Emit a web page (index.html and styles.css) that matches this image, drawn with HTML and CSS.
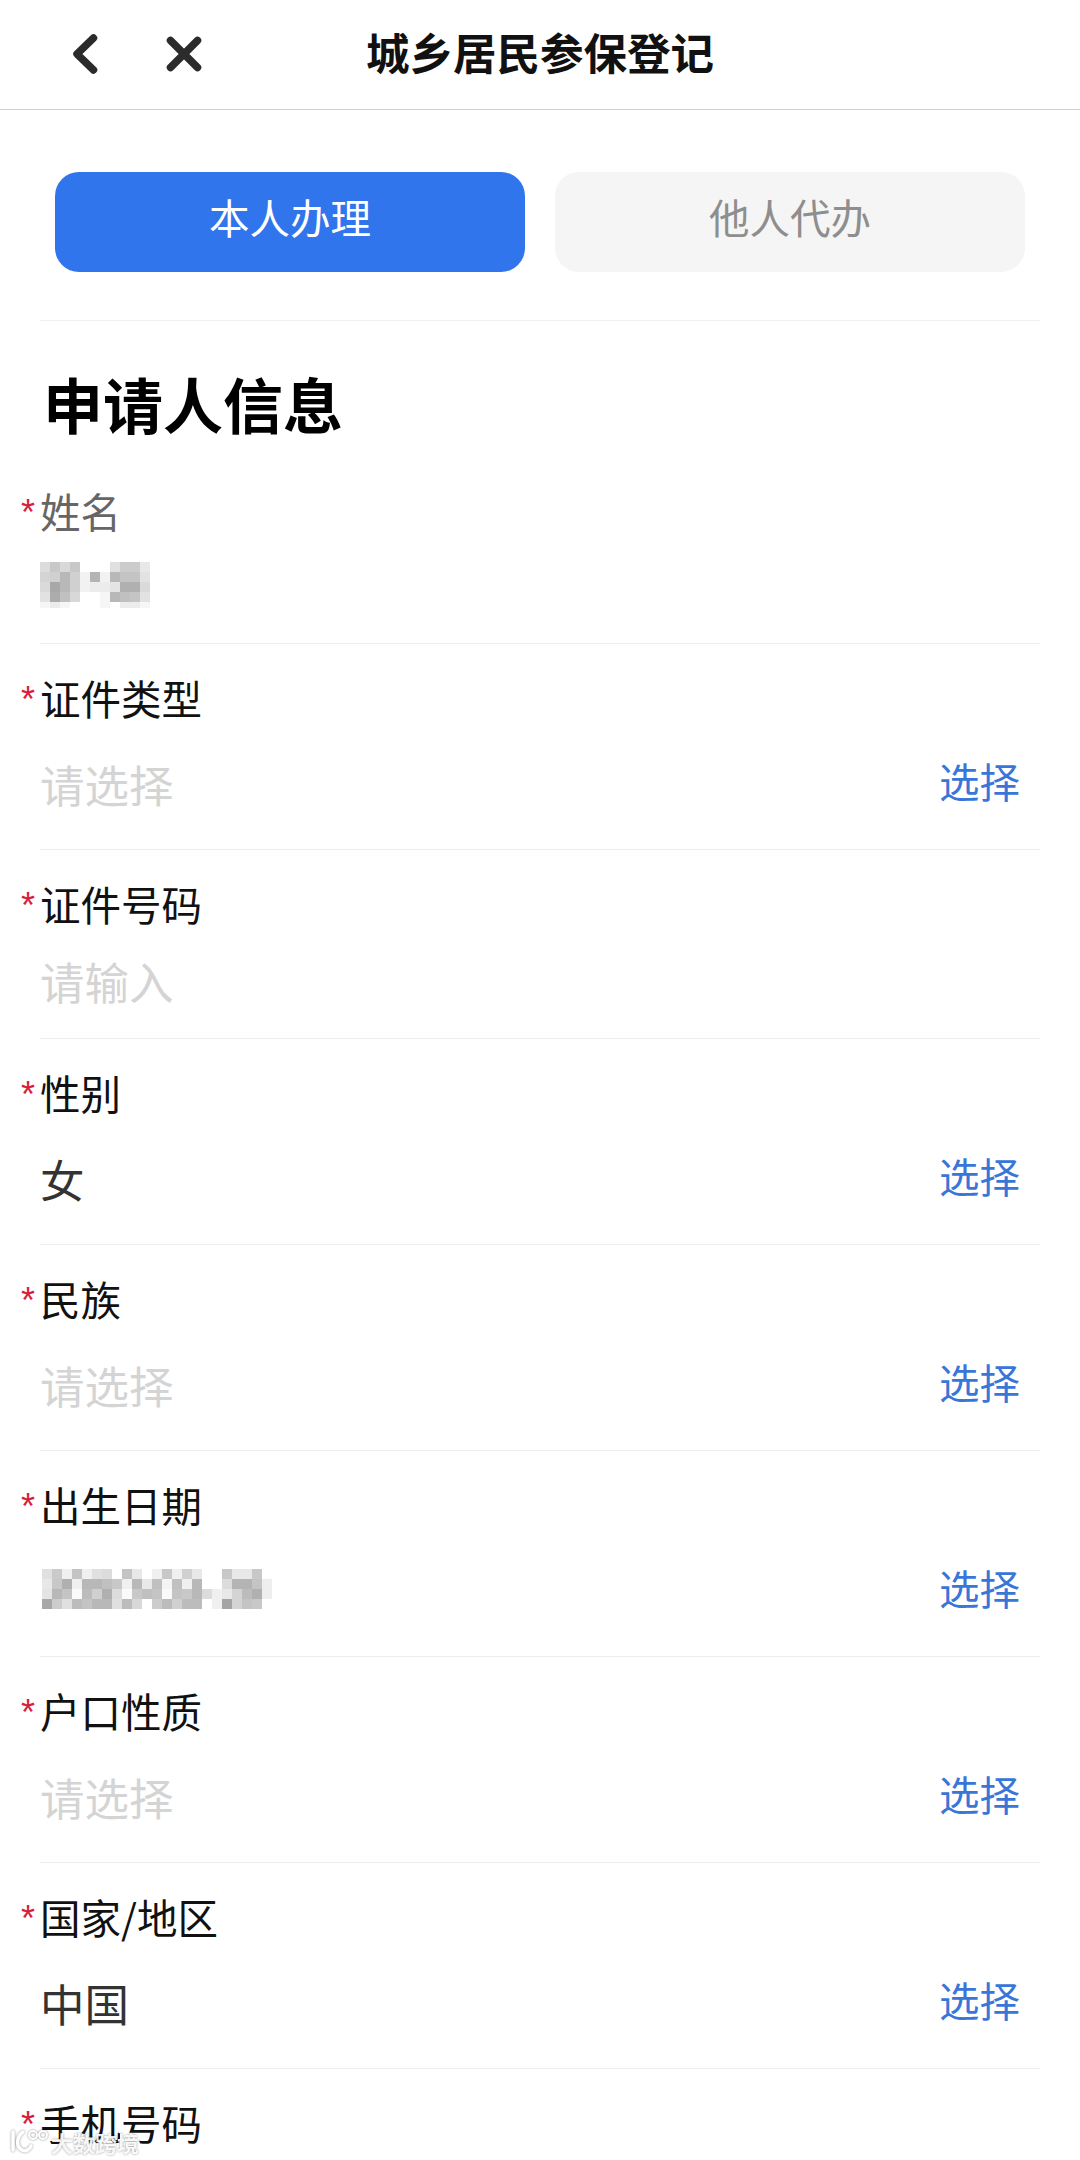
FILE: index.html
```html
<!DOCTYPE html>
<html lang="zh-CN">
<head>
<meta charset="utf-8">
<title>城乡居民参保登记</title>
<link rel="stylesheet" href="styles.css">
</head>
<body>
<div class="page">
  <header class="nav">
    <div class="nav-icons">
      <svg class="icon-back" width="26" height="40" viewBox="0 0 26 40"><path d="M21.5 4 L5 20 L21.5 36" fill="none" stroke="#2b2b2b" stroke-width="7.5" stroke-linecap="round" stroke-linejoin="round"/></svg>
      <svg class="icon-close" width="36" height="36" viewBox="0 0 36 36"><path d="M4.5 4.5 L31.5 31.5 M31.5 4.5 L4.5 31.5" fill="none" stroke="#2b2b2b" stroke-width="7.5" stroke-linecap="round"/></svg>
    </div>
    <h1 class="nav-title">城乡居民参保登记</h1>
  </header>

  <div class="tabs">
    <div class="tab tab-active"><span class="tab-text">本人办理</span></div>
    <div class="tab"><span class="tab-text">他人代办</span></div>
  </div>

  <main class="form">
    <h2 class="section-title">申请人信息</h2>

    <div class="row row-name">
      <div class="label label-muted">姓名</div>
      <div class="value-line">
        <svg class="mosaic" width="110" height="46" viewBox="0 0 11 4.6" shape-rendering="crispEdges">
          <g id="n0">
            <rect x="0" y="0" width="1" height="1" fill="#dcdcdc"/><rect x="1" y="0" width="1" height="1" fill="#c8c8c8"/><rect x="2" y="0" width="1" height="1" fill="#d8d8d8"/><rect x="3" y="0" width="1" height="1" fill="#c8c8c8"/><rect x="7" y="0" width="1" height="1" fill="#e0e0e0"/><rect x="8" y="0" width="1" height="1" fill="#cccccc"/><rect x="9" y="0" width="1" height="1" fill="#cccccc"/><rect x="10" y="0" width="1" height="1" fill="#e8e8e8"/>
            <rect x="0" y="1" width="1" height="1" fill="#d4d4d4"/><rect x="1" y="1" width="1" height="1" fill="#d0d0d0"/><rect x="2" y="1" width="1" height="1" fill="#b8b8b8"/><rect x="3" y="1" width="1" height="1" fill="#d0d0d0"/><rect x="4" y="1" width="1" height="1" fill="#f2f2f2"/><rect x="5" y="1" width="1" height="1" fill="#b4b4b4"/><rect x="6" y="1" width="1" height="1" fill="#f2f2f2"/><rect x="7" y="1" width="1" height="1" fill="#b8b8b8"/><rect x="8" y="1" width="1" height="1" fill="#c4c4c4"/><rect x="9" y="1" width="1" height="1" fill="#c4c4c4"/><rect x="10" y="1" width="1" height="1" fill="#e2e2e2"/>
            <rect x="0" y="2" width="1" height="1" fill="#dadada"/><rect x="1" y="2" width="1" height="1" fill="#a8a8a8"/><rect x="2" y="2" width="1" height="1" fill="#b8b8b8"/><rect x="3" y="2" width="1" height="1" fill="#d0d0d0"/><rect x="4" y="2" width="1" height="1" fill="#f2f2f2"/><rect x="5" y="2" width="1" height="1" fill="#ececec"/><rect x="6" y="2" width="1" height="1" fill="#ececec"/><rect x="7" y="2" width="1" height="1" fill="#e4e4e4"/><rect x="8" y="2" width="1" height="1" fill="#b0b0b0"/><rect x="9" y="2" width="1" height="1" fill="#b0b0b0"/><rect x="10" y="2" width="1" height="1" fill="#dadada"/>
            <rect x="0" y="3" width="1" height="1" fill="#e2e2e2"/><rect x="1" y="3" width="1" height="1" fill="#acacac"/><rect x="2" y="3" width="1" height="1" fill="#c0c0c0"/><rect x="3" y="3" width="1" height="1" fill="#d8d8d8"/><rect x="6" y="3" width="1" height="1" fill="#f6f6f6"/><rect x="7" y="3" width="1" height="1" fill="#b8b8b8"/><rect x="8" y="3" width="1" height="1" fill="#c0c0c0"/><rect x="9" y="3" width="1" height="1" fill="#c4c4c4"/><rect x="10" y="3" width="1" height="1" fill="#e2e2e2"/>
            <rect x="0" y="4" width="1" height="0.6" fill="#f6f6f6"/><rect x="1" y="4" width="1" height="0.6" fill="#ececec"/><rect x="2" y="4" width="1" height="0.6" fill="#f6f6f6"/><rect x="6" y="4" width="1" height="0.6" fill="#f6f6f6"/><rect x="8" y="4" width="1" height="0.6" fill="#ececec"/><rect x="9" y="4" width="1" height="0.6" fill="#ececec"/><rect x="10" y="4" width="1" height="0.6" fill="#f6f6f6"/>
          </g>
        </svg>
      </div>
    </div>

    <div class="row">
      <div class="label">证件类型</div>
      <div class="value-line"><span class="value placeholder">请选择</span><span class="select">选择</span></div>
    </div>

    <div class="row row-input">
      <div class="label">证件号码</div>
      <div class="value-line"><span class="value placeholder">请输入</span></div>
    </div>

    <div class="row">
      <div class="label">性别</div>
      <div class="value-line"><span class="value">女</span><span class="select">选择</span></div>
    </div>

    <div class="row">
      <div class="label">民族</div>
      <div class="value-line"><span class="value placeholder">请选择</span><span class="select">选择</span></div>
    </div>

    <div class="row">
      <div class="label">出生日期</div>
      <div class="value-line">
        <svg class="mosaic mosaic-date" width="232" height="42" viewBox="0 0 23.2 4.2" shape-rendering="crispEdges">
          <rect x="0" y="0" width="1" height="1" fill="#e0e0e0"/><rect x="1" y="0" width="1" height="1" fill="#cacaca"/><rect x="2" y="0" width="1" height="1" fill="#f0f0f0"/><rect x="3" y="0" width="1" height="1" fill="#c4c4c4"/><rect x="4" y="0" width="1" height="1" fill="#f0f0f0"/><rect x="5" y="0" width="1" height="1" fill="#e0e0e0"/><rect x="6" y="0" width="1" height="1" fill="#dcdcdc"/><rect x="8" y="0" width="1" height="1" fill="#c4c4c4"/><rect x="9" y="0" width="1" height="1" fill="#e8e8e8"/><rect x="11" y="0" width="1" height="1" fill="#f0f0f0"/><rect x="12" y="0" width="1" height="1" fill="#c8c8c8"/><rect x="13" y="0" width="1" height="1" fill="#f0f0f0"/><rect x="14" y="0" width="1" height="1" fill="#d0d0d0"/><rect x="15" y="0" width="1" height="1" fill="#e8e8e8"/><rect x="18" y="0" width="1" height="1" fill="#c8c8c8"/><rect x="19" y="0" width="1" height="1" fill="#e8e8e8"/><rect x="20" y="0" width="1" height="1" fill="#e8e8e8"/><rect x="21" y="0" width="1" height="1" fill="#c8c8c8"/>
          <rect x="0" y="1" width="1" height="1" fill="#e8e8e8"/><rect x="1" y="1" width="1" height="1" fill="#c8c8c8"/><rect x="2" y="1" width="1" height="1" fill="#b0b0b0"/><rect x="3" y="1" width="1" height="1" fill="#f0f0f0"/><rect x="4" y="1" width="1" height="1" fill="#b8b8b8"/><rect x="5" y="1" width="1" height="1" fill="#b8b8b8"/><rect x="6" y="1" width="1" height="1" fill="#c0c0c0"/><rect x="7" y="1" width="1" height="1" fill="#c8c8c8"/><rect x="8" y="1" width="1" height="1" fill="#f0f0f0"/><rect x="9" y="1" width="1" height="1" fill="#b8b8b8"/><rect x="10" y="1" width="1" height="1" fill="#e8e8e8"/><rect x="11" y="1" width="1" height="1" fill="#c0c0c0"/><rect x="12" y="1" width="1" height="1" fill="#f4f4f4"/><rect x="13" y="1" width="1" height="1" fill="#c0c0c0"/><rect x="14" y="1" width="1" height="1" fill="#f0f0f0"/><rect x="15" y="1" width="1" height="1" fill="#b8b8b8"/><rect x="18" y="1" width="1" height="1" fill="#dcdcdc"/><rect x="19" y="1" width="1" height="1" fill="#b4b4b4"/><rect x="20" y="1" width="1" height="1" fill="#b4b4b4"/><rect x="21" y="1" width="1" height="1" fill="#c4c4c4"/><rect x="22" y="1" width="1" height="1" fill="#eeeeee"/>
          <rect x="0" y="2" width="1" height="1" fill="#e4e4e4"/><rect x="1" y="2" width="1" height="1" fill="#b8b8b8"/><rect x="2" y="2" width="1" height="1" fill="#c4c4c4"/><rect x="3" y="2" width="1" height="1" fill="#fafafa"/><rect x="4" y="2" width="1" height="1" fill="#bcbcbc"/><rect x="5" y="2" width="1" height="1" fill="#d0d0d0"/><rect x="6" y="2" width="1" height="1" fill="#b0b0b0"/><rect x="7" y="2" width="1" height="1" fill="#dcdcdc"/><rect x="8" y="2" width="1" height="1" fill="#fafafa"/><rect x="9" y="2" width="1" height="1" fill="#c8c8c8"/><rect x="10" y="2" width="1" height="1" fill="#c0c0c0"/><rect x="11" y="2" width="1" height="1" fill="#c4c4c4"/><rect x="12" y="2" width="1" height="1" fill="#fafafa"/><rect x="13" y="2" width="1" height="1" fill="#c4c4c4"/><rect x="14" y="2" width="1" height="1" fill="#c8c8c8"/><rect x="15" y="2" width="1" height="1" fill="#b8b8b8"/><rect x="16" y="2" width="1" height="1" fill="#dcdcdc"/><rect x="17" y="2" width="1" height="1" fill="#f0f0f0"/><rect x="18" y="2" width="1" height="1" fill="#e8e8e8"/><rect x="19" y="2" width="1" height="1" fill="#d4d4d4"/><rect x="20" y="2" width="1" height="1" fill="#bcbcbc"/><rect x="21" y="2" width="1" height="1" fill="#b0b0b0"/><rect x="22" y="2" width="1" height="1" fill="#eeeeee"/>
          <rect x="0" y="3" width="1" height="1" fill="#a8a8a8"/><rect x="1" y="3" width="1" height="1" fill="#cccccc"/><rect x="2" y="3" width="1" height="1" fill="#e0e0e0"/><rect x="3" y="3" width="1" height="1" fill="#bcbcbc"/><rect x="4" y="3" width="1" height="1" fill="#c4c4c4"/><rect x="5" y="3" width="1" height="1" fill="#b8b8b8"/><rect x="6" y="3" width="1" height="1" fill="#b8b8b8"/><rect x="7" y="3" width="1" height="1" fill="#e0e0e0"/><rect x="8" y="3" width="1" height="1" fill="#bcbcbc"/><rect x="9" y="3" width="1" height="1" fill="#d8d8d8"/><rect x="11" y="3" width="1" height="1" fill="#cccccc"/><rect x="12" y="3" width="1" height="1" fill="#bcbcbc"/><rect x="13" y="3" width="1" height="1" fill="#d0d0d0"/><rect x="14" y="3" width="1" height="1" fill="#bcbcbc"/><rect x="15" y="3" width="1" height="1" fill="#bcbcbc"/><rect x="17" y="3" width="1" height="1" fill="#f0f0f0"/><rect x="18" y="3" width="1" height="1" fill="#a4a4a4"/><rect x="19" y="3" width="1" height="1" fill="#d4d4d4"/><rect x="20" y="3" width="1" height="1" fill="#c4c4c4"/><rect x="21" y="3" width="1" height="1" fill="#c8c8c8"/>
        </svg>
        <span class="select">选择</span>
      </div>
    </div>

    <div class="row">
      <div class="label">户口性质</div>
      <div class="value-line"><span class="value placeholder">请选择</span><span class="select">选择</span></div>
    </div>

    <div class="row">
      <div class="label">国家/地区</div>
      <div class="value-line"><span class="value">中国</span><span class="select">选择</span></div>
    </div>

    <div class="row">
      <div class="label">手机号码</div>
    </div>
  </main>

  <div class="watermark">
    <svg width="38" height="26" viewBox="0 0 38 26"><path d="M3 3 V21 M13 3 C6 8 6 18 12 21 C16 23 20 20 21 17" fill="none" stroke="#fff" stroke-width="3.5" stroke-linecap="round"/><circle cx="23" cy="6" r="4" fill="none" stroke="#fff" stroke-width="2"/><circle cx="33" cy="6" r="4" fill="none" stroke="#fff" stroke-width="2"/></svg>
    <span class="watermark-text">大数跨境</span>
  </div>
</div>
</body>
</html>
```

FILE: styles.css
```css
* { box-sizing: border-box; }
html, body { margin: 0; padding: 0; background: #fff; }
body { font-family: "Noto Sans CJK SC", "Liberation Sans", sans-serif; }

.page {
  position: relative;
  width: 1080px;
  height: 2160px;
  overflow: hidden;
  background: #fff;
}

.nav {
  position: relative;
  height: 110px;
  border-bottom: 1px solid #d0d0d0;
  display: flex;
  align-items: center;
  justify-content: center;
}
.nav-icons {
  position: absolute;
  left: 72px;
  top: 34px;
  display: flex;
  align-items: center;
  gap: 68px;
}
.nav-title {
  margin: 0 0 6px;
  font-size: 43.5px;
  line-height: 60px;
  font-weight: 700;
  color: #111;
}

.tabs {
  display: flex;
  gap: 30px;
  padding: 62px 55px 48px;
}
.tab {
  flex: 1;
  height: 100px;
  border-radius: 24px;
  background: #f5f5f5;
  color: #8e8e8e;
  font-size: 40.5px;
  display: flex;
  align-items: center;
  justify-content: center;
}
.tab-text { margin-bottom: 12px; }
.tab-active {
  background: #3175ec;
  color: #fff;
}

.form {
  margin: 0 40px;
  border-top: 1px solid #f0f0f0;
}
.section-title {
  margin: 40px 0 12px 3px;
  font-size: 60px;
  line-height: 84px;
  font-weight: 700;
  color: #000;
}

.row {
  padding: 32px 0 22px;
  border-bottom: 1px solid #ececec;
}
.row:last-child { border-bottom: 0; }
.label {
  position: relative;
  height: 48px;
  font-size: 40.5px;
  line-height: 44px;
  color: #111;
}
.label::before {
  content: "*";
  position: absolute;
  left: -19px;
  top: 0;
  color: #d81e3c;
  font-family: "Liberation Sans", sans-serif;
  font-size: 36px;
  line-height: 48px;
}
.label-muted { color: #666; }

.value-line {
  margin-top: 19px;
  height: 84px;
  padding-right: 20px;
  display: flex;
  align-items: center;
  justify-content: space-between;
}
.value {
  font-size: 44.5px;
  line-height: 60px;
  color: #333;
  margin-top: -3px;
}
.placeholder { color: #d4d4d4; }
.select {
  font-size: 40.5px;
  line-height: 60px;
  color: #3a76d8;
  margin-top: -8px;
}

.row-name { padding-bottom: 10px; }
.row-name .value-line { margin-top: 0; height: 96px; }
.row-input { padding-bottom: 4px; }
.row-input .value-line { margin-top: 0; height: 104px; }

.mosaic { display: block; filter: blur(0.6px); }
.mosaic-date { margin-left: 2px; margin-top: -4px; }

.watermark {
  position: absolute;
  left: 10px;
  bottom: 4px;
  display: flex;
  align-items: center;
  gap: 3px;
  filter: drop-shadow(0 0 1px rgba(0,0,0,.45));
}
.watermark-text {
  font-size: 22px;
  line-height: 28px;
  font-weight: 700;
  color: rgba(255,255,255,.9);
}
```
